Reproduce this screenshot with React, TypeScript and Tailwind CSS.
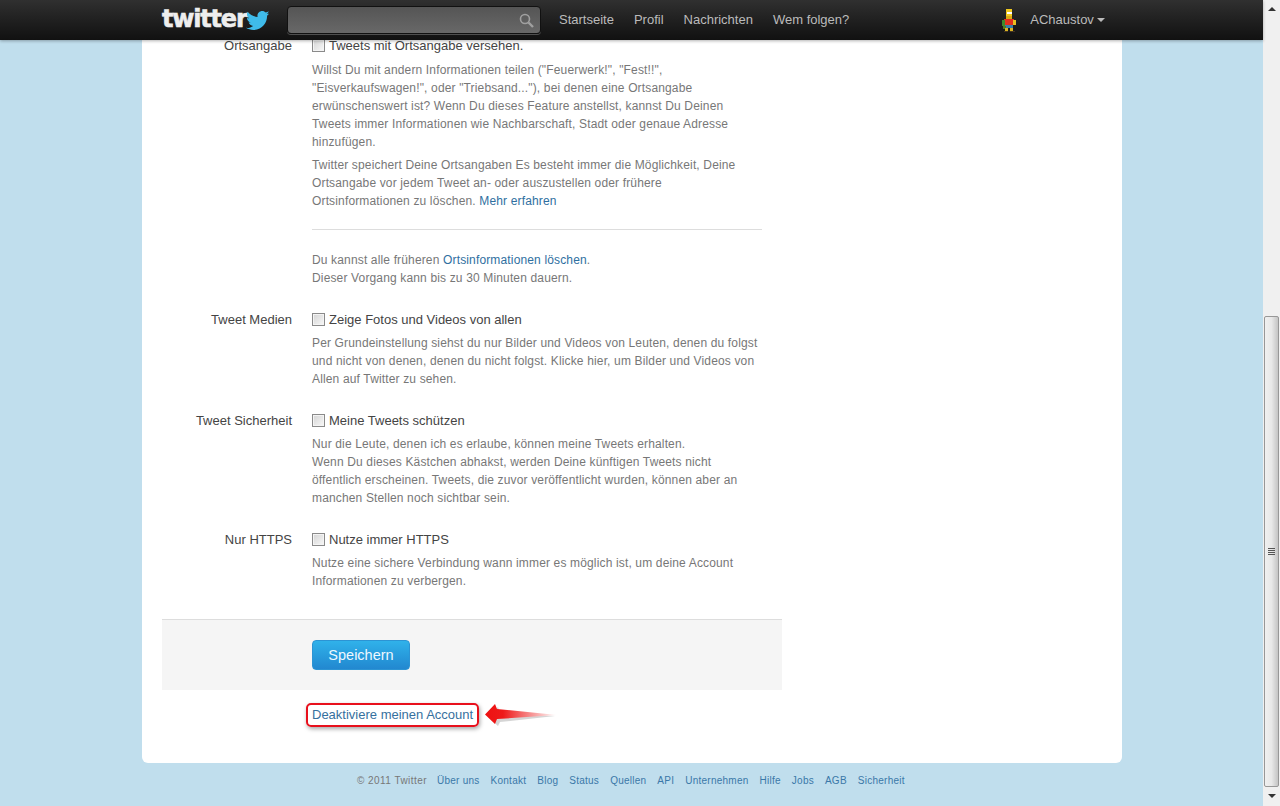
import React from "react";
import { FaTwitter } from "react-icons/fa";

const Help = ({ children, className = "" }: { children: React.ReactNode; className?: string }) => (
  <p className={`text-[12px] leading-[18px] tracking-[0.15px] text-[#777] ${className}`}>{children}</p>
);

const A = ({ children }: { children: React.ReactNode }) => <a className="text-[#2f6f9f]">{children}</a>;

const Check = () => (
  <span className="block w-[13px] h-[13px] shrink-0 border border-[#8a8a8a] bg-gradient-to-br from-[#d4d4d4] to-[#f8f8f8] shadow-[inset_0_0_0_1px_#f4f4f4]" />
);

const Row = ({ label, check, top, children }: { label: string; check: string; top: string; children?: React.ReactNode }) => (
  <div className={`flex ${top}`}>
    <div className="w-[130px] text-right text-[13px] leading-[18px] text-[#444]">{label}</div>
    <div className="ml-[20px] w-[450px]">
      <div className="flex items-center gap-[4px] h-[18px] text-[13px] text-[#444]">
        <span className="-mt-[2px]">
          <Check />
        </span>
        <span>{check}</span>
      </div>
      {children}
    </div>
  </div>
);

const Bart = () => (
  <svg width="16" height="23" viewBox="0 0 16 23" shapeRendering="crispEdges">
    <rect x="5" y="0" width="6" height="8" fill="#f0c81e" />
    <rect x="6" y="3" width="5" height="2" fill="#fff" />
    <rect x="5" y="7" width="6" height="3" fill="#d9a916" />
    <rect x="3" y="10" width="10" height="6" fill="#e0301e" />
    <rect x="1" y="11" width="3" height="6" fill="#3d8a2a" />
    <rect x="12" y="11" width="3" height="5" fill="#e8c020" />
    <rect x="4" y="16" width="8" height="3" fill="#3a7ea8" />
    <rect x="2" y="17" width="3" height="3" fill="#4d7a20" />
    <rect x="4" y="19" width="3" height="3" fill="#d9b420" />
    <rect x="9" y="19" width="3" height="3" fill="#d9b420" />
    <rect x="3" y="22" width="4" height="1" fill="#443322" />
    <rect x="9" y="22" width="5" height="1" fill="#443322" />
  </svg>
);

const footer = ["Über uns", "Kontakt", "Blog", "Status", "Quellen", "API", "Unternehmen", "Hilfe", "Jobs", "AGB", "Sicherheit"];

export default function App() {
  return (
    <div className="flex h-[806px] w-[1280px] overflow-hidden bg-[#c0deed] font-['Liberation_Sans',Arial,sans-serif]">
      <div className="flex w-[1263px] flex-col">
        <header className="relative z-10 flex h-[40px] shrink-0 items-center bg-gradient-to-b from-[#303030] to-[#111] pl-[162px] shadow-[0_1px_3px_rgba(0,0,0,0.3)]">
          <div className="flex w-[107px] items-center">
            <span className="font-['DejaVu_Sans',sans-serif] text-[24px] leading-[30px] font-bold tracking-[-1.2px] text-[#eee] mt-[-2px] [-webkit-text-stroke:0.6px_#eee]">twitter</span>
            <FaTwitter className="ml-[-1px] text-[27px] text-[#3fbbea]" />
          </div>
          <div className="ml-[18px] flex h-[28px] w-[254px] items-center justify-end rounded-[4px] border border-[#111] bg-gradient-to-b from-[#555] to-[#686868] pr-[6px] shadow-[0_1px_0_rgba(255,255,255,0.25)]">
            <svg width="15" height="15" viewBox="0 0 15 15" fill="none" stroke="#a0a0a0">
              <circle cx="6" cy="6" r="4.5" strokeWidth="1.6" />
              <path d="M9.5 9.5 L14 14" strokeWidth="2.4" />
            </svg>
          </div>
          <nav className="ml-[18px] flex gap-[20px] text-[13px] text-[#bbb]">
            <span>Startseite</span>
            <span>Profil</span>
            <span>Nachrichten</span>
            <span>Wem folgen?</span>
          </nav>
          <div className="ml-[152px] flex items-center text-[13px] text-[#bbb]">
            <Bart />
            <span className="ml-[13px]">AChaustov</span>
            <span className="ml-[3px] h-0 w-0 border-x-[4px] border-t-[4px] border-x-transparent border-t-[#bbb]" />
          </div>
        </header>

        <main className="ml-[142px] flex h-[723px] w-[980px] shrink-0 flex-col rounded-b-[6px] bg-white pl-[20px]">
          <div className="w-[620px]">
            <Row label="Ortsangabe" check="Tweets mit Ortsangabe versehen." top="mt-[-3px]">
              <Help className="mt-[6px]">
                Willst Du mit andern Informationen teilen ("Feuerwerk!", "Fest!!", "Eisverkaufswagen!", oder "Triebsand..."), bei denen eine Ortsangabe erwünschenswert ist? Wenn Du dieses Feature anstellst, kannst Du Deinen Tweets immer Informationen wie Nachbarschaft, Stadt oder genaue Adresse hinzufügen.
              </Help>
              <Help className="mt-[5px]">
                Twitter speichert Deine Ortsangaben Es besteht immer die Möglichkeit, Deine Ortsangabe vor jedem Tweet an- oder auszustellen oder frühere Ortsinformationen zu löschen. <A>Mehr erfahren</A>
              </Help>
              <div className="mt-[19px] border-t border-[#ddd]" />
              <Help className="mt-[21px]">
                Du kannst alle früheren <A>Ortsinformationen löschen</A>.<br />
                Dieser Vorgang kann bis zu 30 Minuten dauern.
              </Help>
            </Row>
            <Row label="Tweet Medien" check="Zeige Fotos und Videos von allen" top="mt-[24px]">
              <Help className="mt-[5px]">
                Per Grundeinstellung siehst du nur Bilder und Videos von Leuten, denen du folgst und nicht von denen, denen du nicht folgst. Klicke hier, um Bilder und Videos von Allen auf Twitter zu sehen.
              </Help>
            </Row>
            <Row label="Tweet Sicherheit" check="Meine Tweets schützen" top="mt-[24px]">
              <Help className="mt-[5px]">
                Nur die Leute, denen ich es erlaube, können meine Tweets erhalten.<br />
                Wenn Du dieses Kästchen abhakst, werden Deine künftigen Tweets nicht öffentlich erscheinen. Tweets, die zuvor veröffentlicht wurden, können aber an manchen Stellen noch sichtbar sein.
              </Help>
            </Row>
            <Row label="Nur HTTPS" check="Nutze immer HTTPS" top="mt-[24px]">
              <Help className="mt-[5px]">
                Nutze eine sichere Verbindung wann immer es möglich ist, um deine Account Informationen zu verbergen.
              </Help>
            </Row>
            <div className="mt-[29px] h-[71px] border-t border-[#ddd] bg-[#f5f5f5] pl-[150px] pt-[20px]">
              <button className="h-[30px] w-[98px] rounded-[4px] border border-[#2c94d4] bg-gradient-to-b from-[#30b2ea] to-[#2288d0] pt-[2px] text-[14.5px] text-[#eef8ff]">
                Speichern
              </button>
            </div>
            <div className="mt-[13px] flex items-center pl-[144px]">
              <span className="rounded-[5px] border-2 border-[#e8101c] px-[4px] text-[13px] leading-[20px] text-[#36709e] shadow-[1px_2px_4px_rgba(0,0,0,0.35)]">
                Deaktiviere meinen Account
              </span>
              <svg className="ml-[6px]" width="72" height="23" viewBox="0 0 72 23">
                <defs>
                  <linearGradient id="arrowFill" x1="0" x2="1" y1="0" y2="0">
                    <stop offset="0" stopColor="#ee1111" />
                    <stop offset="0.25" stopColor="#ee1a1a" />
                    <stop offset="1" stopColor="#ffffff" />
                  </linearGradient>
                </defs>
                <path d="M3 13 L13 22 L15 18 L70 12 L15 9 L13 3 Z" fill="#888" fillOpacity="0.35" />
                <path d="M0 10.5 L10 0 L12 5 L72 11 L12 15 L10 20 Z" fill="url(#arrowFill)" />
              </svg>
            </div>
          </div>
        </main>

        <footer className="flex h-[43px] items-start pl-[357px] pt-[11px] text-[10px] leading-[14px] tracking-[0.25px]">
          <span className="text-[#777] tracking-[0.45px]">© 2011 Twitter</span>
          <div className="ml-[10px] flex gap-[11px] text-[#3a78a8]">
            {footer.map((f) => (
              <span key={f}>{f}</span>
            ))}
          </div>
        </footer>
      </div>

      <aside className="flex w-[17px] shrink-0 flex-col items-center bg-[#f0f0f0]">
        <div className="mt-[7px] h-0 w-0 border-x-[4px] border-b-[4px] border-x-transparent border-b-[#333]" />
        <div className="mt-[305px] flex h-[471px] w-[15px] items-center justify-center rounded-[2px] border border-[#979797] bg-gradient-to-r from-[#f0f0f0] via-[#e8e8e8] to-[#c4c4c4]">
          <div className="flex flex-col gap-[1px]">
            <span className="block h-[1px] w-[7px] bg-[#555]" />
            <span className="block h-[1px] w-[7px] bg-[#555]" />
            <span className="block h-[1px] w-[7px] bg-[#555]" />
            <span className="block h-[1px] w-[7px] bg-[#555]" />
          </div>
        </div>
        <div className="mt-[7px] h-0 w-0 border-x-[4px] border-t-[4px] border-x-transparent border-t-[#333]" />
      </aside>
    </div>
  );
}
